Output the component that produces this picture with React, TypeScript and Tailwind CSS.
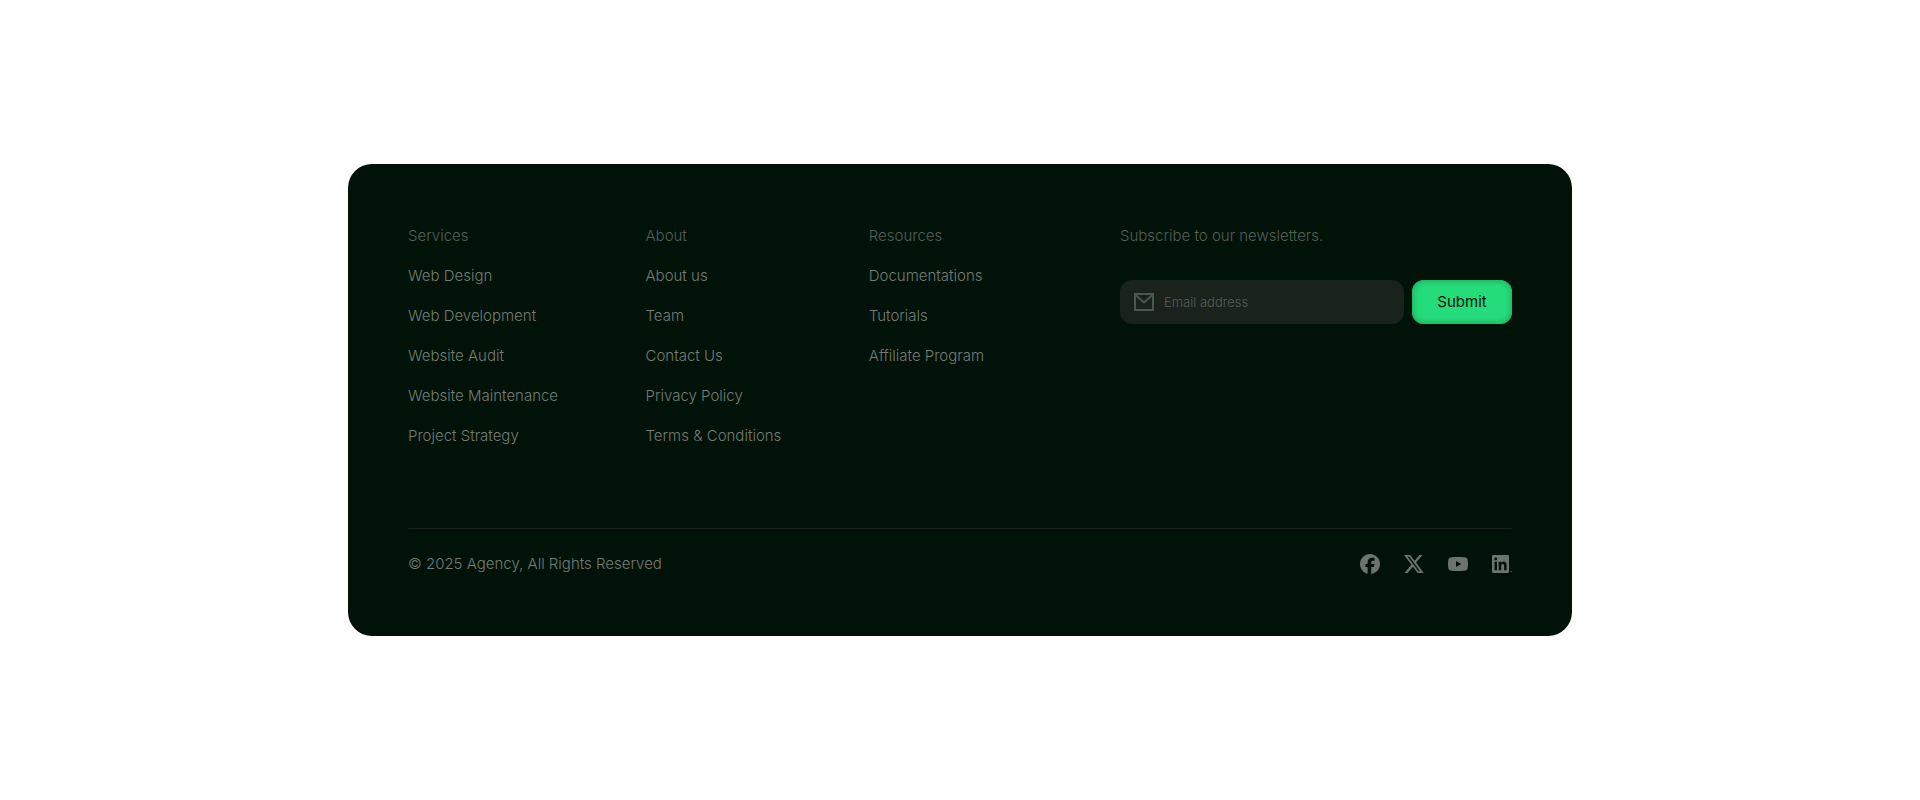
import type { ReactNode } from "react";

type Column = { title: string; links: string[] };

const columns: Column[] = [
  {
    title: "Services",
    links: ["Web Design", "Web Development", "Website Audit", "Website Maintenance", "Project Strategy"],
  },
  {
    title: "About",
    links: ["About us", "Team", "Contact Us", "Privacy Policy", "Terms & Conditions"],
  },
  {
    title: "Resources",
    links: ["Documentations", "Tutorials", "Affiliate Program"],
  },
];

const socials: { label: string; icon: ReactNode }[] = [
  {
    label: "Facebook",
    icon: (
      <path d="M20 10C20 4.477 15.523 0 10 0S0 4.477 0 10c0 4.69 3.229 8.625 7.584 9.706v-6.65H5.522V10h2.062V8.683c0-3.403 1.54-4.981 4.882-4.981.634 0 1.727.124 2.174.248v2.77a12.9 12.9 0 0 0-1.155-.037c-1.64 0-2.273.621-2.273 2.236V10h3.266l-.561 3.056h-2.705v6.871C16.163 19.33 20 15.113 20 10Z" />
    ),
  },
  {
    label: "X",
    icon: (
      <path d="M15.55 1h3.03l-6.62 7.6L19.75 19h-6.1l-4.77-6.27L3.43 19H.4l7.07-8.13L0 1h6.25l4.31 5.73L15.55 1Zm-1.06 16.17h1.68L5.33 2.74h-1.8l10.96 14.43Z" />
    ),
  },
  {
    label: "YouTube",
    icon: (
      <path
        fillRule="evenodd"
        d="M10 3c1.9 0 4.4.04 6.3.18 1.9.14 3.05.9 3.35 2.75.23 1.4.35 2.7.35 4.07s-.12 2.67-.35 4.07c-.3 1.85-1.45 2.61-3.35 2.75-1.9.14-4.4.18-6.3.18s-4.4-.04-6.3-.18c-1.9-.14-3.05-.9-3.35-2.75C.12 12.67 0 11.37 0 10s.12-2.67.35-4.07c.3-1.85 1.45-2.61 3.35-2.75C5.6 3.04 8.1 3 10 3ZM8 7v6l5.2-3L8 7Z"
      />
    ),
  },
  {
    label: "LinkedIn",
    icon: (
      <>
        <path
          fillRule="evenodd"
          d="M1.2 1h14.6c.7 0 1.2.5 1.2 1.2v15.6c0 .7-.5 1.2-1.2 1.2H1.2C.5 19 0 18.5 0 17.8V2.2C0 1.5.5 1 1.2 1ZM2.5 7.8v8.5H5V7.8H2.5Zm1.25-4.3a1.45 1.45 0 1 0 0 2.9 1.45 1.45 0 0 0 0-2.9ZM6.7 7.8v8.5h2.5v-4.2c0-1.3.4-2.2 1.5-2.2s1.4.9 1.4 2.2v4.2h2.5v-4.8c0-2.4-.7-3.9-3-3.9-1.2 0-2 .6-2.4 1.3V7.8H6.7Z"
        />
        <circle cx="19.2" cy="17.6" r=".6" />
      </>
    ),
  },
];

export default function App() {
  return (
    <main className="flex min-h-screen items-center justify-center bg-white p-6 font-['Inter',sans-serif]">
      <footer className="w-full max-w-[1224px] rounded-3xl bg-[#011208] p-[60px] text-[15px] leading-6 font-light text-[#747d76]">
        <div className="flex flex-wrap justify-between gap-y-10 pb-20">
          <nav aria-label="Footer" className="flex w-full max-w-xl flex-wrap justify-between gap-y-10">
            {columns.map((column) => (
              <section key={column.title} className="flex flex-col gap-4">
                <h2 className="text-[#565f58]">{column.title}</h2>
                <ul className="flex flex-col gap-4">
                  {column.links.map((link) => (
                    <li key={link}>
                      <a href="#" className="hover:text-white">
                        {link}
                      </a>
                    </li>
                  ))}
                </ul>
              </section>
            ))}
          </nav>
          <form className="flex w-full max-w-[392px] flex-col gap-8" onSubmit={(event) => event.preventDefault()}>
            <label htmlFor="email" className="text-[#565f58]">
              Subscribe to our newsletters.
            </label>
            <div className="flex gap-2">
              <div className="flex h-11 min-w-0 flex-1 items-center gap-2.5 rounded-xl bg-[#1a221c] px-3.5">
                <svg viewBox="0 0 20 20" className="size-5 shrink-0 text-[#4d564f]" fill="none" stroke="currentColor" strokeWidth="2" aria-hidden="true">
                  <path d="M1 2h18v16H1zM1.5 3 10 10.5 18.5 3" />
                </svg>
                <input
                  id="email"
                  type="email"
                  placeholder="Email address"
                  className="w-full min-w-0 bg-transparent text-[13px] text-white outline-none placeholder:text-[#565f58]"
                />
              </div>
              <button
                type="submit"
                className="h-11 w-[100px] rounded-xl bg-[#25dc7b] font-normal text-[#011208] shadow-[inset_0_0_5px_2px_#20b264]"
              >
                Submit
              </button>
            </div>
          </form>
        </div>
        <div className="flex flex-wrap items-center justify-between gap-4 border-t border-[#1a221c] pt-[23px]">
          <p>© 2025 Agency, All Rights Reserved</p>
          <ul className="flex gap-6 text-[#6b746d]">
            {socials.map((social) => (
              <li key={social.label}>
                <a href="#" aria-label={social.label} className="block hover:text-white">
                  <svg viewBox="0 0 20 20" className="size-5" fill="currentColor" aria-hidden="true">
                    {social.icon}
                  </svg>
                </a>
              </li>
            ))}
          </ul>
        </div>
      </footer>
    </main>
  );
}
